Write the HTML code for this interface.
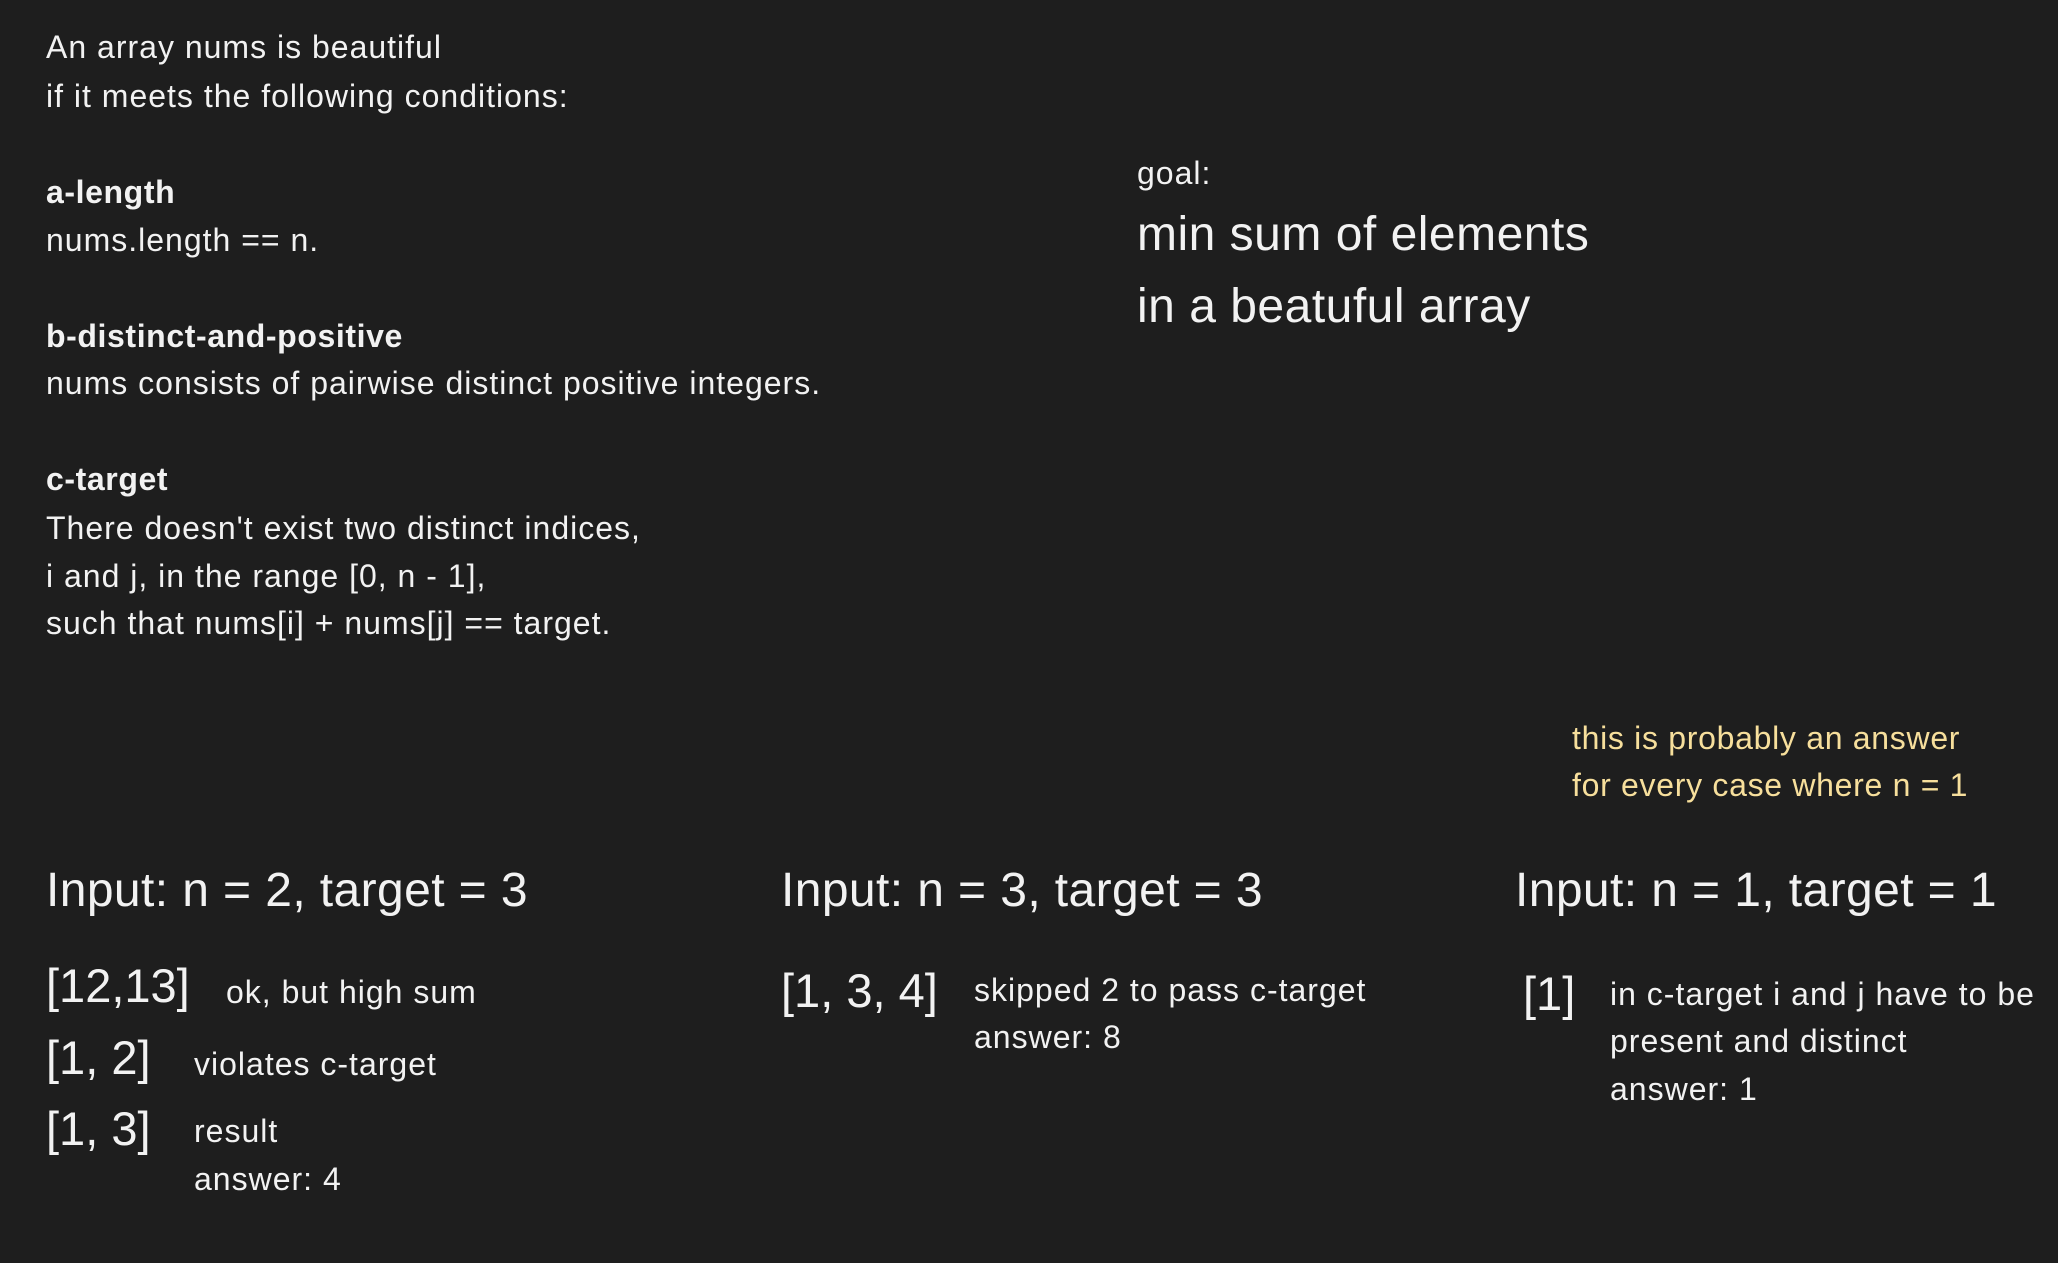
<!DOCTYPE html>
<html><head><meta charset="utf-8"><style>
html,body{margin:0;padding:0;background:#1e1e1e;}
body{width:2058px;height:1263px;position:relative;overflow:hidden;font-family:"Liberation Sans",sans-serif;color:#f2f2f2;}
.t{position:absolute;white-space:nowrap;font-size:32px;line-height:40px;letter-spacing:1px;}
.b{font-weight:bold;letter-spacing:0.6px;}
.h{position:absolute;white-space:nowrap;font-size:48px;line-height:56px;letter-spacing:0.4px;}
.y{color:#f7df9c;letter-spacing:0.7px;}
.br{letter-spacing:0;font-size:47px;}
</style></head><body>
<div class="t" style="left:46px;top:27px">An array nums is beautiful</div>
<div class="t" style="left:46px;top:76px">if it meets the following conditions:</div>
<div class="t b" style="left:46px;top:172px">a-length</div>
<div class="t" style="left:46px;top:220px">nums.length == n.</div>
<div class="t b" style="left:46px;top:316px">b-distinct-and-positive</div>
<div class="t" style="left:46px;top:363px">nums consists of pairwise distinct positive integers.</div>
<div class="t b" style="left:46px;top:459px">c-target</div>
<div class="t" style="left:46px;top:508px">There doesn't exist two distinct indices,</div>
<div class="t" style="left:46px;top:556px">i and j, in the range [0, n - 1],</div>
<div class="t" style="left:46px;top:603px">such that nums[i] + nums[j] == target.</div>

<div class="t" style="left:1137px;top:153px">goal:</div>
<div class="h" style="left:1137px;top:207px;letter-spacing:0.5px">min sum of elements</div>
<div class="h" style="left:1137px;top:279px;letter-spacing:0.5px">in a beatuful array</div>

<div class="t y" style="left:1572px;top:718px">this is probably an answer</div>
<div class="t y" style="left:1572px;top:765px">for every case where n = 1</div>

<div class="h" style="left:46px;top:863px">Input: n = 2, target = 3</div>
<div class="h" style="left:781px;top:863px">Input: n = 3, target = 3</div>
<div class="h" style="left:1515px;top:863px">Input: n = 1, target = 1</div>

<div class="h br" style="left:46px;top:958px">[12,13]</div>
<div class="t" style="left:226px;top:972px">ok, but high sum</div>
<div class="h br" style="left:46px;top:1030px">[1, 2]</div>
<div class="t" style="left:194px;top:1044px">violates c-target</div>
<div class="h br" style="left:46px;top:1101px">[1, 3]</div>
<div class="t" style="left:194px;top:1111px">result</div>
<div class="t" style="left:194px;top:1159px">answer: 4</div>

<div class="h br" style="left:781px;top:963px">[1, 3, 4]</div>
<div class="t" style="left:974px;top:970px">skipped 2 to pass c-target</div>
<div class="t" style="left:974px;top:1017px">answer: 8</div>

<div class="h br" style="left:1523px;top:966px">[1]</div>
<div class="t" style="left:1610px;top:974px">in c-target i and j have to be</div>
<div class="t" style="left:1610px;top:1021px">present and distinct</div>
<div class="t" style="left:1610px;top:1069px">answer: 1</div>
</body></html>
